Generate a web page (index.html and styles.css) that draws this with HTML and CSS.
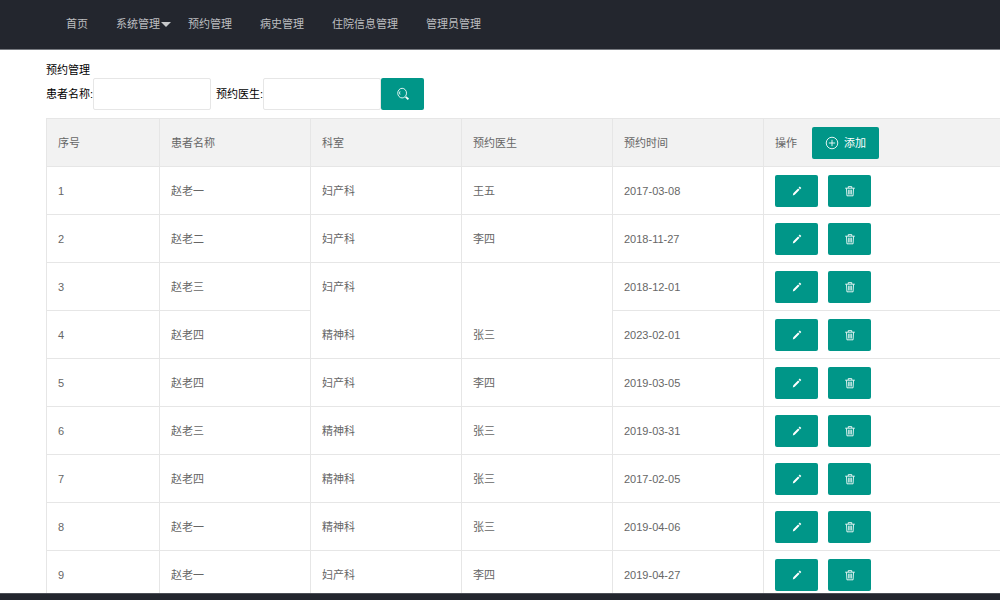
FILE: index.html
```
<!DOCTYPE html>
<html lang="zh-CN">
<head>
    <meta charset="UTF-8">
    <meta name="viewport" content="width=device-width, initial-scale=1.0">
    <title>预约管理</title>
    <link rel="stylesheet" href="styles.css">
</head>
<body>
    <svg class="sprite" aria-hidden="true">
        <symbol id="icon-search" viewBox="0 0 16 16">
            <ellipse cx="7" cy="7" rx="5" ry="5.5"/>
            <path d="M4.6 8.6a3.2 3.2 0 0 1 0-3.6"/>
            <path class="thick" d="M11 11.2l3.2 2.8"/>
        </symbol>
        <symbol id="icon-add" viewBox="0 0 16 16">
            <circle cx="8" cy="8" r="6.6"/>
            <path d="M8 4.4v7.2M4.4 8h7.2"/>
        </symbol>
        <symbol id="icon-edit" viewBox="0 0 16 16">
            <path class="fill" d="M11.2 2.9l1.7 1.6-1.3 1.6-1.8-1.7zM9.2 5l1.8 1.7-5.6 5.5-2.2.8.6-2.3z"/>
        </symbol>
        <symbol id="icon-delete" viewBox="0 0 16 16">
            <path d="M2.5 4.8h11M6 4.5V3h4v1.5M4 5l.5 8.5h7L12 5M6.5 6.5v5.5M8 6.5v5.5M9.5 6.5v5.5"/>
        </symbol>
    </svg>

    <header class="header">
        <nav class="nav">
            <a href="#">首页</a>
            <a href="#" class="has-more">系统管理</a>
            <a href="#">预约管理</a>
            <a href="#">病史管理</a>
            <a href="#">住院信息管理</a>
            <a href="#">管理员管理</a>
        </nav>
    </header>

    <main class="content">
        <div class="page-title">预约管理</div>
        <form class="search-form" onsubmit="return false">
            <label for="patient">患者名称:</label>
            <input type="text" id="patient" class="patient">
            <label for="doctor">预约医生:</label>
            <input type="text" id="doctor">
            <button class="btn" aria-label="搜索"><svg class="icon"><use href="#icon-search"/></svg></button>
        </form>

        <table class="table">
            <colgroup>
                <col class="col-no">
                <col class="col-text">
                <col class="col-text">
                <col class="col-text">
                <col class="col-text">
                <col>
            </colgroup>
            <thead>
                <tr>
                    <th>序号</th>
                    <th>患者名称</th>
                    <th>科室</th>
                    <th>预约医生</th>
                    <th>预约时间</th>
                    <th>
                        <div class="actions head">
                            <span>操作</span>
                            <button class="btn btn-add"><svg class="icon"><use href="#icon-add"/></svg>添加</button>
                        </div>
                    </th>
                </tr>
            </thead>
            <tbody id="rows"></tbody>
        </table>
    </main>

    <footer class="footer"></footer>

    <script src="script.js"></script>
</body>
</html>
```
FILE: styles.css
```
* {
    box-sizing: border-box;
}
body {
    margin: 0;
    height: 100vh;
    display: flex;
    flex-direction: column;
    overflow: hidden;
    font-family: "Liberation Sans", "Noto Sans CJK SC", sans-serif;
    font-size: 11px;
    line-height: 18px;
    color: #000;
    background-color: #fff;
}
.sprite {
    display: none;
}
.header {
    flex: none;
    height: 50px;
    padding-left: 52px;
    background-color: #23262e;
    border-bottom: 1px solid #777a80;
}
.nav {
    display: flex;
}
.nav a {
    position: relative;
    padding: 0 14px;
    line-height: 48px;
    color: #bdbec0;
    text-decoration: none;
    white-space: nowrap;
}
.nav a:hover {
    color: #fff;
}
.nav .has-more::after {
    content: "";
    position: absolute;
    top: 22px;
    right: 3px;
    border: 5px solid transparent;
    border-top-color: #c8c9cb;
    border-bottom: none;
}
.content {
    flex: 1;
    min-height: 0;
    overflow: hidden;
    padding: 12px 0 0 46px;
}
.page-title {
    line-height: 16px;
}
.search-form {
    display: flex;
    align-items: center;
    margin-bottom: 8px;
}
.search-form input {
    width: 118px;
    height: 32px;
    padding: 0 8px;
    border: 1px solid #e6e6e6;
    border-radius: 2px;
    font: inherit;
    outline: none;
}
.search-form .patient {
    margin-right: 5px;
}
.btn {
    display: inline-flex;
    align-items: center;
    justify-content: center;
    width: 43px;
    height: 32px;
    padding: 0;
    border: none;
    border-radius: 2px;
    background-color: #009688;
    color: #fff;
    font: inherit;
    cursor: pointer;
}
.btn:hover {
    background-color: #33ab9f;
}
.btn-add {
    width: 67px;
    gap: 5px;
}
.icon {
    width: 14px;
    height: 14px;
    fill: none;
    stroke: #fff;
    stroke-width: 1;
}
.icon .thick, .thick {
    stroke-width: 2;
}
.fill {
    fill: #fff;
    stroke: none;
}
.table {
    width: 100%;
    table-layout: fixed;
    border-collapse: separate;
    border-spacing: 0;
    border-top: 1px solid #e6e6e6;
    border-left: 1px solid #e6e6e6;
    color: #666;
}
.col-no {
    width: 113px;
}
.col-text {
    width: 151px;
}
.table th, .table td {
    height: 48px;
    padding: 0 11px;
    border-right: 1px solid #e6e6e6;
    border-bottom: 1px solid #e6e6e6;
    font-weight: normal;
    text-align: left;
}
.table th {
    background-color: #f2f2f2;
}
.table th:last-child, .table td:last-child {
    padding-left: 11px;
    border-right: none;
}
.table .open {
    border-bottom: none;
}
.actions {
    display: flex;
    align-items: center;
    gap: 10px;
}
.actions.head {
    gap: 15px;
}
.footer {
    flex: none;
    height: 7px;
    background-color: #23262e;
    border-top: 1px solid #4c4f56;
}
```
FILE: script.js
```
const rows = [
    ['赵老一', '妇产科', '王五', '2017-03-08'],
    ['赵老二', '妇产科', '李四', '2018-11-27'],
    ['赵老三', '妇产科', '', '2018-12-01'],
    ['赵老四', '精神科', '张三', '2023-02-01'],
    ['赵老四', '妇产科', '李四', '2019-03-05'],
    ['赵老三', '精神科', '张三', '2019-03-31'],
    ['赵老四', '精神科', '张三', '2017-02-05'],
    ['赵老一', '精神科', '张三', '2019-04-06'],
    ['赵老一', '妇产科', '李四', '2019-04-27']
];

document.getElementById('rows').innerHTML = rows.map(([name, dept, doctor, date], i) => {
    // no doctor yet: department and doctor cells stay open at the bottom
    const open = doctor ? '' : ' class="open"';
    return `
        <tr>
            <td>${i + 1}</td>
            <td>${name}</td>
            <td${open}>${dept}</td>
            <td${open}>${doctor}</td>
            <td>${date}</td>
            <td>
                <div class="actions">
                    <button class="btn" aria-label="编辑"><svg class="icon"><use href="#icon-edit"/></svg></button>
                    <button class="btn" aria-label="删除"><svg class="icon"><use href="#icon-delete"/></svg></button>
                </div>
            </td>
        </tr>`;
}).join('');
```
